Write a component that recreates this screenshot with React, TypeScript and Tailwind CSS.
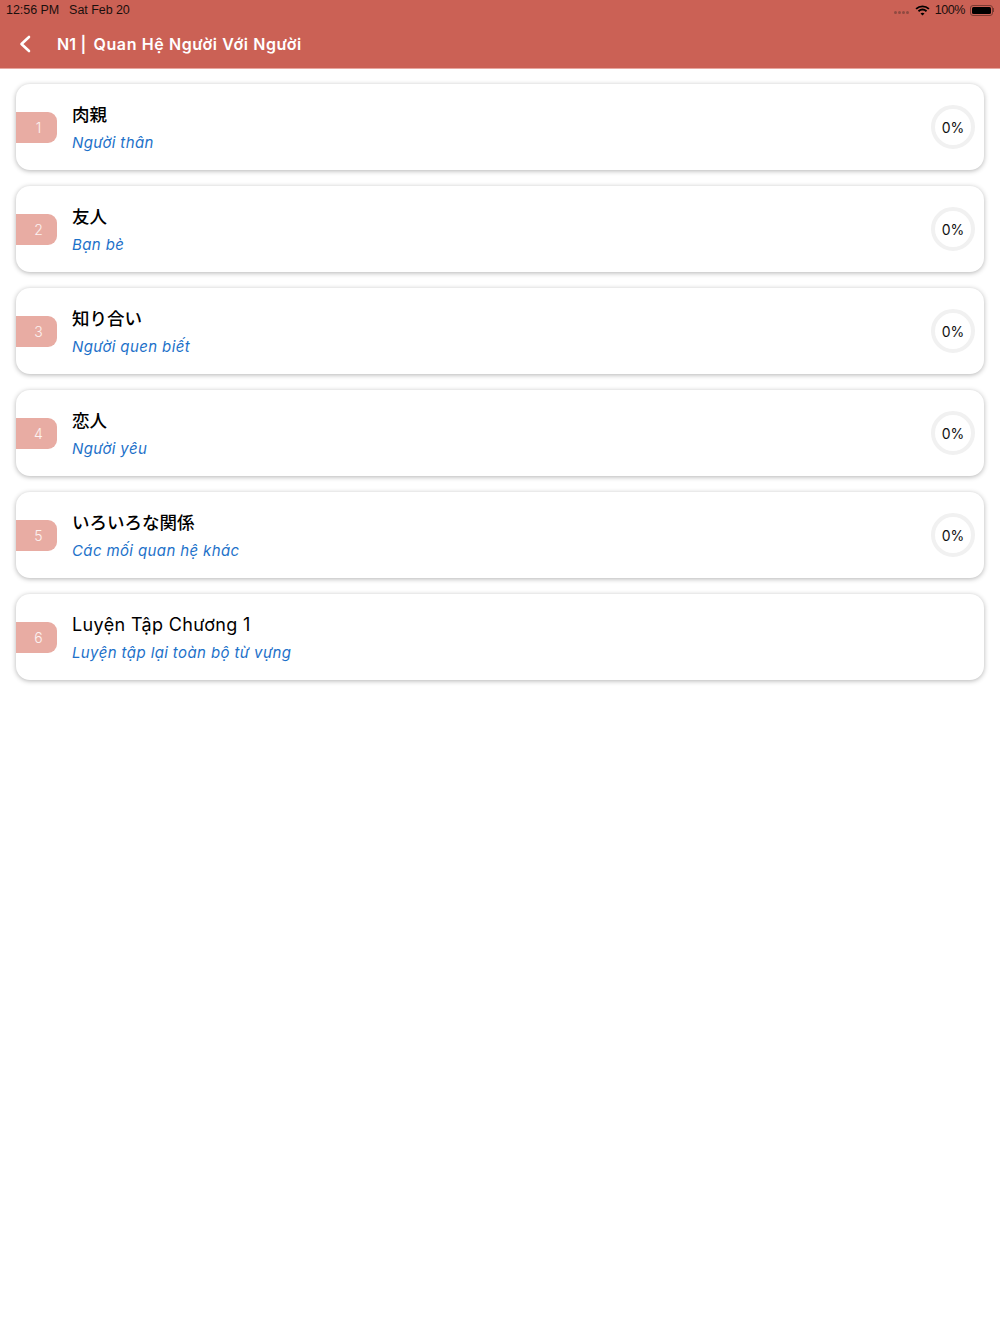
const items = [
  { n: 1, t: "肉親", s: "Người thân", p: true },
  { n: 2, t: "友人", s: "Bạn bè", p: true },
  { n: 3, t: "知り合い", s: "Người quen biết", p: true },
  { n: 4, t: "恋人", s: "Người yêu", p: true },
  { n: 5, t: "いろいろな関係", s: "Các mối quan hệ khác", p: true },
  { n: 6, t: "Luyện Tập Chương 1", s: "Luyện tập lại toàn bộ từ vựng", p: false },
];

export default function App() {
  return (
    <div className="w-[1000px] h-[1334px] bg-white font-['Inter','Noto_Sans_CJK_JP',sans-serif]">
      <header className="h-[69px] bg-[#cb6155] border-b border-[#e8a79f] text-white">
        <div className="h-[20px] flex items-center justify-between pl-[6px] pr-[6px] text-[12.5px] text-[#1a0f0d] font-['Liberation_Sans',sans-serif]">
          <div className="flex gap-[10px]">
            <span className="tracking-[-0.05px]">12:56 PM</span>
            <span className="tracking-[-0.05px]">Sat Feb 20</span>
          </div>
          <div className="flex items-center gap-[5px]">
            <div className="flex gap-[1px] mr-[1px] mt-[5px]">
              <i className="w-[3px] h-[3px] rounded-full bg-[#8f4a41]" />
              <i className="w-[3px] h-[3px] rounded-full bg-[#8f4a41]" />
              <i className="w-[3px] h-[3px] rounded-full bg-[#8f4a41]" />
              <i className="w-[3px] h-[3px] rounded-full bg-[#8f4a41]" />
            </div>
            <svg width="15" height="11" viewBox="0 0 16 12" fill="none" stroke="#000" strokeWidth="2">
              <path d="M1 4.2C5 .6 11 .6 15 4.2" />
              <path d="M3.6 6.8C6.2 4.6 9.8 4.6 12.4 6.8" />
              <path d="M8 11.5 5.8 9.2C7 8.2 9 8.2 10.2 9.2Z" fill="#000" stroke="none" />
            </svg>
            <span className="text-[12.5px] tracking-[-0.4px]">100%</span>
            <div className="flex items-center">
              <div className="w-[23px] h-[11px] rounded-[3px] border border-[#7c3b33] p-[1px]">
                <div className="w-full h-full rounded-[1.5px] bg-black" />
              </div>
              <div className="w-[1px] h-[4px] bg-[#7c3b33]" />
            </div>
          </div>
        </div>
        <div className="h-[48px] flex items-center">
          <svg className="ml-[18px] mb-[1px]" width="14" height="18" viewBox="0 0 14 18" fill="none" stroke="#fff" strokeWidth="2.6" strokeLinecap="round" strokeLinejoin="round">
            <path d="M11 2 3.5 9l7.5 7" />
          </svg>
          <h1 className="ml-[25px] flex gap-[7px] text-[16px] font-semibold tracking-[0.6px] whitespace-pre">
            <span className="tracking-[0.2px]">N1 |</span>
            <span>Quan Hệ Người Với Người</span>
          </h1>
        </div>
      </header>
      <main className="flex flex-col gap-[16px] px-[16px] pt-[15px]">
        {items.map((i) => (
          <div key={i.n} className="h-[86px] flex items-center rounded-[14px] bg-white shadow-[0_1px_5px_rgba(0,0,0,0.3)]">
            <div className="w-[41px] h-[31px] shrink-0 flex items-center justify-center rounded-r-[9px] bg-[#e8aca3] text-white/85 text-[14px] font-light pl-[4px]">
              {i.n}
            </div>
            <div className="ml-[15px] flex-1 flex flex-col gap-[6px] pt-[2px]">
              <div className={`leading-[24px] text-black ${i.p ? "text-[17.5px] font-medium" : "text-[18px] tracking-[0.35px]"}`}>{i.t}</div>
              <div className="text-[15px] leading-[20px] italic text-[#1d71c9] tracking-[0.38px]">{i.s}</div>
            </div>
            {i.p && (
              <div className="mr-[9px] w-[44px] h-[44px] pt-[1px] rounded-full border-[4px] border-[#f1f1f1] flex items-center justify-center text-[14px] text-[#111]">
                0%
              </div>
            )}
          </div>
        ))}
      </main>
    </div>
  );
}
